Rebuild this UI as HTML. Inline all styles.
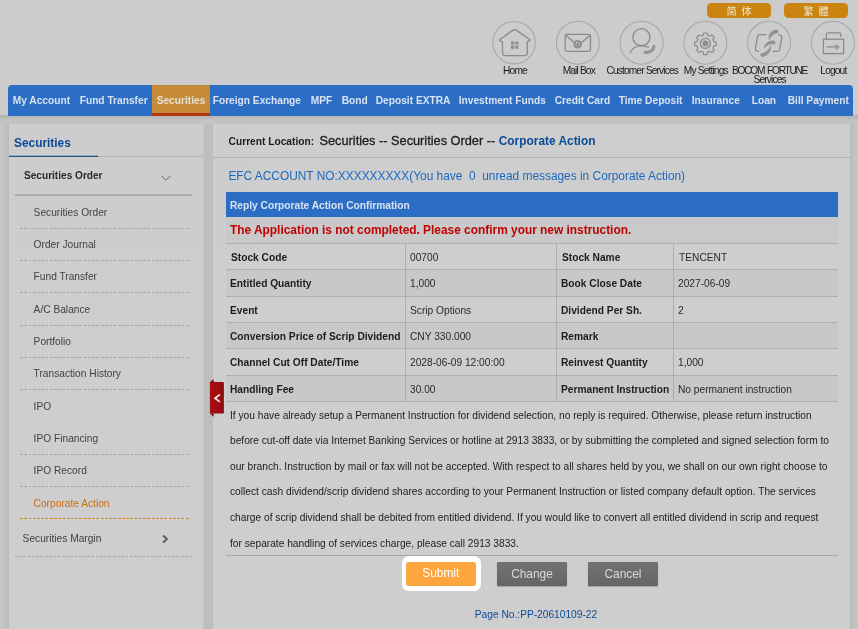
<!DOCTYPE html>
<html lang="en">
<head>
<meta charset="utf-8">
<title>Corporate Action</title>
<style>
*{box-sizing:border-box;margin:0;padding:0}
html,body{width:858px;height:629px;overflow:hidden}
body{background:#cccccc;font-family:"Liberation Sans","Noto Sans CJK SC",sans-serif;font-size:10.2px;color:#222;position:relative}
#pg{position:absolute;left:0;top:0;width:858px;height:629px;overflow:hidden;will-change:transform;opacity:.999}
.abs{position:absolute}
/* language buttons */
.lang{position:absolute;top:3px;height:14.6px;width:63.7px;background:#c9850f;border-radius:4.5px;color:#ead9b8;font-weight:500;font-size:10.2px;line-height:17px;text-align:center;font-family:"Liberation Sans","Noto Sans CJK SC",sans-serif;word-spacing:2px}
/* top icons */
.icolab{position:absolute;top:65.6px;width:90px;text-align:center;font-size:10.2px;line-height:9px;letter-spacing:-0.85px;color:#1a1a1a}
/* nav */
#nav{position:absolute;left:8px;top:85px;width:845px;height:31px;background:#2c6ec5;border-radius:4px 4px 0 0}
#nav span{position:absolute;top:0;height:31px;line-height:31px;color:#d8e2f0;font-weight:bold;font-size:10.2px;white-space:nowrap}
#nav .act{background:#c68b37;border-bottom:3px solid #b0380f;text-align:center;color:#e8dfd2}
/* left */
#left{position:absolute;left:9px;top:124px;width:194px;height:505px;background:#cecece;box-shadow:-3px 0 4px rgba(0,0,0,.05)}
#gap{position:absolute;left:203px;top:124px;width:10px;height:505px;background:linear-gradient(90deg,#c6c6c6 0,#bebebe 2px,#bebebe 100%)}
#main{position:absolute;left:213px;top:124px;width:636.5px;height:505px;background:#cecece;box-shadow:3px 0 4px rgba(0,0,0,.05)}
.sub{position:absolute;left:25.6px;font-size:10.2px;color:#424242;white-space:nowrap;line-height:12px}
.dash{position:absolute;left:12px;width:169px;height:1px;background:repeating-linear-gradient(90deg,#a7a7a7 0,#a7a7a7 2.8px,transparent 2.8px,transparent 4.25px)}
/* table */
.row{position:absolute;left:226px;width:612px;height:27px;border-top:1px solid #aeaeae}
.row.alt{background:#c8c8c8}
.row b,.row i{position:absolute;top:0.6px;line-height:26px;font-size:10.2px;white-space:nowrap;font-style:normal}
.row b{font-weight:bold;color:#1c1c1c}
.row i{color:#2a2a2a}
.vl{position:absolute;top:243px;height:158px;width:1px;background:#aeaeae}
.para{position:absolute;left:230px;top:402.7px;width:620px;font-size:10.2px;line-height:25.6px;color:#1c1c1c;white-space:nowrap}
.btn{position:absolute;height:24px;width:70px;background:linear-gradient(#727272,#656565);color:#d9d9d9;font-size:11.9px;line-height:24px;text-align:center;border-radius:1px;box-shadow:0 1px 1px rgba(0,0,0,.2)}
</style>
</head>
<body>
<div id="pg">
<!-- language buttons -->
<div class="lang" style="left:707.2px">简 体</div>
<div class="lang" style="left:784.2px;font-family:'Liberation Sans','Noto Sans CJK TC',sans-serif">繁 體</div>

<!-- icons -->
<svg class="abs" style="left:0;top:0" width="858" height="90" viewBox="0 0 858 90" fill="none" stroke="#8b8b8b" stroke-width="1.3" stroke-linecap="round" stroke-linejoin="round">
<g stroke="#a8a8a8" stroke-width="1.1">
<circle cx="514.1" cy="42.7" r="21.2"/><circle cx="577.9" cy="42.7" r="21.5"/><circle cx="641.6" cy="42.7" r="21.5"/><circle cx="705.4" cy="42.7" r="21.5"/><circle cx="769.1" cy="42.7" r="21.5"/><circle cx="832.9" cy="42.7" r="21.5"/>
</g>
<!-- home -->
<path d="M513.6 29.9 Q514.7 29 515.8 29.9 L529.3 39.2 Q530.6 40.4 529.2 41.2 L527.3 41.6 L527.3 52.5 Q527.3 55.7 524.1 55.7 L505.7 55.7 Q502.5 55.7 502.5 52.5 L502.5 41.6 L500.6 41.2 Q499 40.4 500.3 39.2 Z"/>
<g fill="#8f8f8f" stroke="none"><rect x="511" y="41.4" width="3.2" height="3.2"/><rect x="515.2" y="41.4" width="3.2" height="3.2"/><rect x="511" y="45.6" width="3.2" height="3.2"/><rect x="515.2" y="45.6" width="3.2" height="3.2"/></g>
<!-- mail -->
<rect x="565.2" y="34.4" width="25.3" height="17" rx="1.8"/>
<path d="M565.8 35.6 L574.2 42.4 M590 35.6 L581.4 42.4"/>
<circle cx="577.7" cy="44.2" r="3.3" stroke-width="1.9" fill="#b9b9b9"/>
<text x="577.7" y="46" font-size="5.6" font-weight="bold" text-anchor="middle" fill="#7a7a7a" stroke="none" font-family="Liberation Sans, sans-serif">e</text>
<!-- customer -->
<circle cx="641.4" cy="37.2" r="8.5"/>
<path d="M630.3 53 Q632.5 46.6 640 45.6 Q645 45.6 648.4 47.2"/>
<path d="M645.2 52.3 Q652.5 52.6 654 46.6" stroke-width="3.2" stroke="#939393"/>
<!-- gear -->
<circle cx="705.4" cy="43.4" r="3" fill="#909090" stroke="none"/>
<circle cx="705.4" cy="43.4" r="5"/>
<path transform="translate(705.4 43.4) scale(.93) translate(-705.4 -43.4)" d="M703.6 32.2 h3.6 l0.7 2.7 l2 0.85 l2.4 -1.4 l2.55 2.55 l-1.4 2.4 l0.85 2 l2.7 0.7 v3.6 l-2.7 0.7 l-0.85 2 l1.4 2.4 l-2.55 2.55 l-2.4 -1.4 l-2 0.85 l-0.7 2.7 h-3.6 l-0.7 -2.7 l-2 -0.85 l-2.4 1.4 l-2.55 -2.55 l1.4 -2.4 l-0.85 -2 l-2.7 -0.7 v-3.6 l2.7 -0.7 l0.85 -2 l-1.4 -2.4 l2.55 -2.55 l2.4 1.4 l2 -0.85 z"/>
<!-- bocom -->
<path d="M765.9 34.7 L759.6 34.7 Q758 34.8 757.6 36.4 L755.4 48.8 Q755.2 50.5 756.8 50.9 L758.6 51.4"/>
<path d="M778.6 34.5 L780.6 35.3 Q782 36 781.8 37.8 L779.6 49.8 Q779.3 51.4 777.7 51.4 L773.2 51.4"/>
<g fill="#909090" stroke="#909090" stroke-width=".7">
<path d="M769.2 39.2 Q767.6 32 775.9 29.8 Q778.6 29.8 778.1 32.4 Q772 33.5 769.2 39.2 Z"/>
<path d="M764.3 47.6 Q764.8 41.6 773.2 40.7 Q775.6 41 774.9 44 Q769 42.6 764.3 47.6 Z"/>
<path d="M770.6 46.4 Q771.4 53.5 762.9 56.8 Q760.2 56.6 760.8 54 Q767.6 52.6 770.6 46.4 Z"/>
</g>
<!-- logout -->
<rect x="823.4" y="39.2" width="20.2" height="14.4" stroke-linejoin="miter"/>
<path d="M826.4 39 V34.4 Q826.4 32.9 827.9 32.9 H839.3 Q840.8 32.9 840.8 34.4 V36.4"/>
<path d="M827.3 46.9 H837" stroke-width="1.4"/>
<path d="M835.6 43.6 L839.9 46.9 L835.6 50.2 Z" fill="#9a9a9a" stroke="none"/>
</svg>

<div class="icolab" style="left:470px">Home</div>
<div class="icolab" style="left:533.8px">Mail Box</div>
<div class="icolab" style="left:597.2px">Customer Services</div>
<div class="icolab" style="left:660.8px">My Settings</div>
<div class="icolab" style="left:724.6px"><span style="letter-spacing:-1.3px;word-spacing:1.5px">BOCOM FORTUNE</span><br>Services</div>
<div class="icolab" style="left:788.4px">Logout</div>

<div class="abs" style="left:0;top:115px;width:858px;height:514px;background:linear-gradient(#b4b4b4 0,#b9b9b9 2px,#c4c4c4 6px,#c4c4c4 100%)"></div>
<!-- nav -->
<div id="nav">
<span style="left:4.7px">My Account</span>
<span style="left:71.7px">Fund Transfer</span>
<span class="act" style="left:144px;width:58px">Securities</span>
<span style="left:204.7px">Foreign Exchange</span>
<span style="left:302.7px">MPF</span>
<span style="left:333.7px">Bond</span>
<span style="left:367.7px">Deposit EXTRA</span>
<span style="left:450.7px">Investment Funds</span>
<span style="left:546.7px">Credit Card</span>
<span style="left:610.7px">Time Deposit</span>
<span style="left:683.7px">Insurance</span>
<span style="left:743.7px">Loan</span>
<span style="left:779.7px">Bill Payment</span>
</div>

<!-- left panel -->
<div id="left">
<div class="abs" style="left:-1px;top:0;width:0;height:0;white-space:nowrap">
<div class="abs" style="left:6px;top:12px;font-size:11.9px;font-weight:bold;color:#0b4a98;line-height:14px">Securities</div>
<div class="abs" style="left:1px;top:32px;width:194px;height:1px;background:#b5b5b5"></div>
<div class="abs" style="left:1px;top:32px;width:89px;height:1px;background:#1b5a8c;box-shadow:0 -1px 0 rgba(27,90,140,.3)"></div>
<div class="abs" style="left:16px;top:46.3px;font-size:10.1px;font-weight:bold;color:#2a2a2a;line-height:12px">Securities Order</div>
<svg class="abs" style="left:152px;top:49.8px" width="12" height="8" viewBox="0 0 12 8" fill="none" stroke="#8a8a8a" stroke-width="1.3"><path d="M1.5 2 L6 6 L10.5 2"/></svg>
<div class="abs" style="left:7px;top:70px;width:177px;height:2px;background:#ababab"></div>

<div class="sub" style="top:83.4px">Securities Order</div><div class="dash" style="top:104px"></div>
<div class="sub" style="top:115.4px">Order Journal</div><div class="dash" style="top:136px"></div>
<div class="sub" style="top:147.4px">Fund Transfer</div><div class="dash" style="top:168px"></div>
<div class="sub" style="top:180.4px">A/C Balance</div><div class="dash" style="top:201px"></div>
<div class="sub" style="top:212.4px">Portfolio</div><div class="dash" style="top:233px"></div>
<div class="sub" style="top:244.4px">Transaction History</div><div class="dash" style="top:265px"></div>
<div class="sub" style="top:277.4px">IPO</div>
<div class="sub" style="top:309.4px">IPO Financing</div><div class="dash" style="top:330px"></div>
<div class="sub" style="top:341.4px">IPO Record</div><div class="dash" style="top:362px"></div>
<div class="sub" style="top:374.4px;color:#c96d10">Corporate Action</div><div class="dash" style="top:394px;background:repeating-linear-gradient(90deg,#d08a2e 0,#d08a2e 2.8px,transparent 2.8px,transparent 4.25px)"></div>
<div class="sub" style="left:14.6px;top:408.9px">Securities Margin</div>
<svg class="abs" style="left:153px;top:410px" width="8" height="10" viewBox="0 0 8 10" fill="none" stroke="#585858" stroke-width="1.7"><path d="M2 1.5 L6 5 L2 8.5"/></svg>
<div class="dash" style="left:7px;width:177px;top:432px"></div>
</div>
</div>
<div id="gap"></div>

<!-- main panel -->
<div id="main">
<div class="abs" style="left:15.6px;top:11.5px;font-size:10.2px;font-weight:bold;color:#1c1c1c;line-height:12px;white-space:nowrap">Current Location:</div>
<div class="abs" style="left:106.5px;top:9.5px;font-size:12.75px;color:#1c1c1c;line-height:14px;white-space:nowrap;-webkit-text-stroke:.3px #1c1c1c">Securities -- Securities Order -- <b style="color:#0b4a98;font-size:11.9px;-webkit-text-stroke:0">Corporate Action</b></div>
<div class="abs" style="left:0;top:33px;width:639px;height:1px;background:#b3b3b3"></div>
<div class="abs" style="left:15.4px;top:45.1px;font-size:11.9px;color:#1a69bf;line-height:14px;white-space:pre">EFC ACCOUNT NO:XXXXXXXXX(You have  0  unread messages in Corporate Action)</div>
</div>

<div class="abs" style="left:226px;top:192px;width:612px;height:26px;background:#2c6ec5"></div>
<div class="abs" style="left:230px;top:193.5px;font-size:10.2px;font-weight:bold;color:#d8e2f0;line-height:24px;white-space:nowrap">Reply Corporate Action Confirmation</div>
<div class="abs" style="left:226px;top:217px;width:612px;height:26px;background:#c9c9c9"></div>
<div class="abs" style="left:230px;top:217.5px;font-size:11.9px;font-weight:bold;color:#c00000;line-height:24px;white-space:nowrap">The Application is not completed. Please confirm your new instruction.</div>

<div class="row" style="top:243px"><b style="left:5px">Stock Code</b><i style="left:184px">00700</i><b style="left:336px">Stock Name</b><i style="left:453px">TENCENT</i></div>
<div class="row alt" style="top:269px"><b style="left:4px">Entitled Quantity</b><i style="left:184px">1,000</i><b style="left:335px">Book Close Date</b><i style="left:452px">2027-06-09</i></div>
<div class="row" style="top:296px"><b style="left:4px">Event</b><i style="left:184px">Scrip Options</i><b style="left:335px">Dividend Per Sh.</b><i style="left:452px">2</i></div>
<div class="row alt" style="top:322px"><b style="left:4px">Conversion Price of Scrip Dividend</b><i style="left:184px">CNY 330.000</i><b style="left:335px">Remark</b></div>
<div class="row" style="top:348px"><b style="left:4px">Channel Cut Off Date/Time</b><i style="left:184px">2028-06-09 12:00:00</i><b style="left:335px">Reinvest Quantity</b><i style="left:452px">1,000</i></div>
<div class="row alt" style="top:375px"><b style="left:4px">Handling Fee</b><i style="left:184px">30.00</i><b style="left:335px">Permanent Instruction</b><i style="left:452px">No permanent instruction</i></div>
<div class="abs" style="left:226px;top:401px;width:612px;height:1px;background:#aeaeae"></div>
<div class="vl" style="left:405px"></div><div class="vl" style="left:556px"></div><div class="vl" style="left:673px"></div>

<div class="para">If you have already setup a Permanent Instruction for dividend selection, no reply is required. Otherwise, please return instruction<br>before cut-off date via Internet Banking Services or hotline at 2913 3833, or by submitting the completed and signed selection form to<br>our branch. Instruction by mail or fax will not be accepted. With respect to all shares held by you, we shall on our own right choose to<br>collect cash dividend/scrip dividend shares according to your Permanent Instruction or listed company default option. The services<br>charge of scrip dividend shall be debited from entitled dividend. If you would like to convert all entitled dividend in scrip and request<br>for separate handling of services charge, please call 2913 3833.</div>
<div class="abs" style="left:226px;top:555px;width:612px;height:1px;background:#a8a8a8"></div>

<div class="abs" style="left:402px;top:556px;width:79px;height:35px;background:#fff;border-radius:7px"></div>
<div class="btn" style="left:405.6px;top:562px;width:70.4px;height:24.3px;line-height:23.2px;background:#fda640;color:#fff;box-shadow:none;border-radius:2.5px">Submit</div>
<div class="btn" style="left:497px;top:562px">Change</div>
<div class="btn" style="left:588px;top:562px">Cancel</div>

<div class="abs" style="left:436px;top:609px;width:200px;text-align:center;font-size:10.2px;color:#0b4a98;line-height:12px">Page No.:PP-20610109-22</div>

<!-- collapse tab -->
<svg class="abs" style="left:209px;top:378px" width="16" height="40" viewBox="0 0 16 40"><defs><linearGradient id="tg" x1="0" x2="1" y1="0" y2="0"><stop offset="0" stop-color="#aa0c0e"/><stop offset=".5" stop-color="#a00d10"/><stop offset="1" stop-color="#880e12"/></linearGradient></defs><path d="M0.9 4.3 L4.6 1.2 L4.6 4.3 Z" fill="#650a0c"/><path d="M0.9 35.4 L4.6 38.8 L4.6 35.4 Z" fill="#650a0c"/><path d="M0.9 4.1 H13.9 Q14.9 4.1 14.9 5.1 V34.6 Q14.9 35.6 13.9 35.6 H0.9 Z" fill="url(#tg)"/><path d="M10.9 16.5 L6 20.2 L10.9 23.9" fill="none" stroke="#f2e4e4" stroke-width="1.7"/></svg>
</div>
</body>
</html>
